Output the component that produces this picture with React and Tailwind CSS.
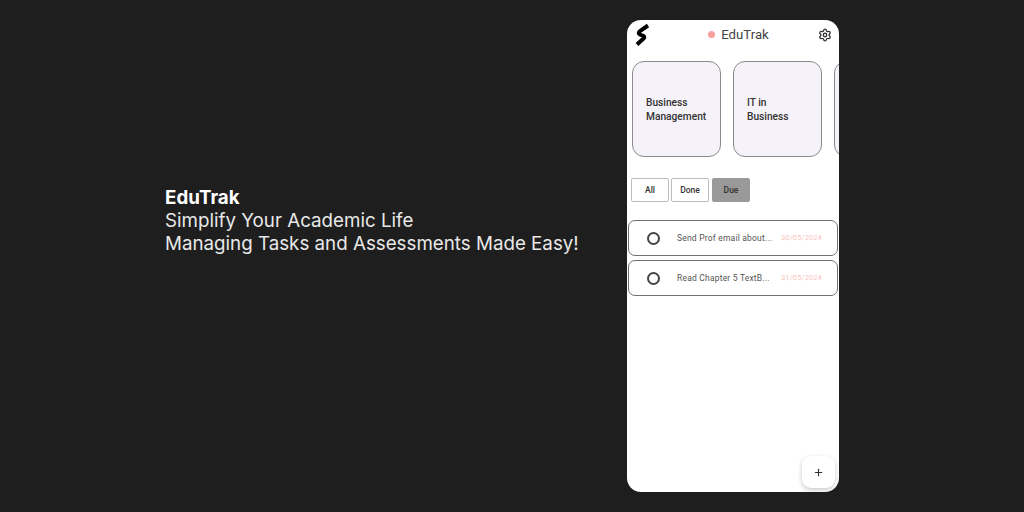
import React from "react";
import { Settings, Plus } from "lucide-react";

const courses = [
  { id: 1, lines: ["Business", "Management"] },
  { id: 2, lines: ["IT in", "Business"] },
  { id: 3, lines: ["", ""] },
];

const tasks = [
  { id: 1, title: "Send Prof email about...", date: "30/05/2024" },
  { id: 2, title: "Read Chapter 5 TextB...", date: "31/05/2024" },
];

const filters = [
  { label: "All", active: false },
  { label: "Done", active: false },
  { label: "Due", active: true },
];

const Logo = () => (
  <svg width="16" height="24" viewBox="0 0 16 24" className="text-black">
    <path d="M14 2.5 L6 8 Q3.5 10 6 11.5 L9.5 13 Q11 14 9.5 15.5 L3 21.5" fill="none" stroke="currentColor" strokeWidth="4" />
  </svg>
);

const App = () => {
  return (
    <div className="w-[1024px] h-[512px] bg-[#1e1e1e] flex overflow-hidden font-['Inter',sans-serif]">
      {/* Intro text */}
      <div className="w-[627px] pl-[165px] pt-[186px] text-[18.75px] leading-[23px] text-[#e8e8e8]">
        <p className="font-bold text-white">EduTrak</p>
        <p>Simplify Your Academic Life</p>
        <p className="whitespace-nowrap">Managing Tasks and Assessments Made Easy!</p>
      </div>

      {/* Phone */}
      <div className="relative w-[212px] h-[472px] mt-[20px] bg-white rounded-[14px] overflow-hidden font-['Roboto',sans-serif]">
        <div className="flex items-center justify-between h-[30px] pl-[7px] pr-[7px]">
          <Logo />
          <div className="flex items-center gap-[6px] ml-[9px]">
            <span className="w-[7px] h-[7px] rounded-full bg-[#f9a09c]" />
            <span className="text-[13.2px] text-[#444]">EduTrak</span>
          </div>
          <Settings size={14} strokeWidth={2.2} className="text-[#333]" />
        </div>

        {/* Course cards */}
        <div className="flex gap-[12px] pl-[5px] mt-[11px]">
          {courses.map((c) => (
            <div
              key={c.id}
              className="shrink-0 w-[89px] h-[96px] bg-[#f5f2fa] border-[1.5px] border-[#8a8a8a] rounded-[12px] flex flex-col justify-center pl-[13px] pt-[1px] text-[10.2px] leading-[14px] font-medium text-[#333]"
            >
              <span>{c.lines[0]}</span>
              <span>{c.lines[1]}</span>
            </div>
          ))}
        </div>

        {/* Filters */}
        <div className="flex gap-[2px] pl-[4px] mt-[21px]">
          {filters.map((f) => (
            <div
              key={f.label}
              className={`w-[38px] h-[24px] flex items-center justify-center rounded-[2px] border text-[8.5px] font-medium text-[#333] ${
                f.active ? "ml-[1px] bg-[#999999] border-[#999999]" : "bg-white border-[#bcbcbc]"
              }`}
            >
              {f.label}
            </div>
          ))}
        </div>

        {/* Tasks */}
        <div className="flex flex-col gap-[4px] pl-[1px] mt-[18px]">
          {tasks.map((t) => (
            <div
              key={t.id}
              className="w-[210px] h-[36px] flex items-center border-[1.5px] border-[#707070] rounded-[7px] pl-[18px]"
            >
              <span className="w-[13px] h-[13px] rounded-full border-2 border-[#444] shrink-0" />
              <span className="ml-[17px] w-[104px] text-[8.5px] tracking-[0.2px] text-[#555] whitespace-nowrap">
                {t.title}
              </span>
              <span className="text-[7.5px] tracking-[0.1px] text-[#f9c5c3] whitespace-nowrap">{t.date}</span>
            </div>
          ))}
        </div>

        {/* Add button */}
        <div className="absolute right-[4px] bottom-[4px] w-[33px] h-[32px] bg-white rounded-[9px] shadow-[0_2px_5px_rgba(0,0,0,0.22)] flex items-center justify-center">
          <Plus size={11} strokeWidth={2.4} className="text-[#333]" />
        </div>
      </div>
    </div>
  );
};

export default App;
